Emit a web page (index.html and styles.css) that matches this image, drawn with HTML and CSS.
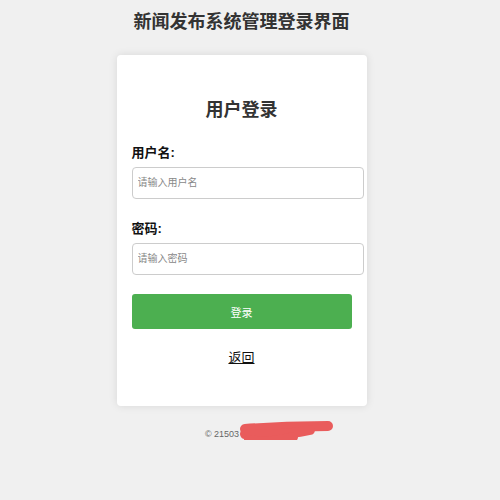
FILE: index.html
```html
<!DOCTYPE html>
<html lang="zh-CN">

<head>
    <meta charset="UTF-8">
    <meta name="viewport" content="width=device-width, initial-scale=1.0">
    <title>新闻发布系统管理登录界面</title>
    <link rel="stylesheet" href="styles.css">
</head>

<body>
    <h1 class="page-title">新闻发布系统管理登录界面</h1>

    <div class="login-box">
        <h2 class="login-title">用户登录</h2>
        <form class="login-form" onsubmit="return false;">
            <label class="form-label" for="username">用户名:</label>
            <input type="text" id="username" class="form-input" placeholder="请输入用户名">

            <label class="form-label" for="password">密码:</label>
            <input type="password" id="password" class="form-input" placeholder="请输入密码">

            <button type="submit" class="login-btn">登录</button>
        </form>
        <div class="back-link">
            <a href="#">返回</a>
        </div>
    </div>

    <footer class="footer">
        <span class="footer-line">© 21503
            <svg class="scribble" width="96" height="30" viewBox="0 0 96 30">
                <path d="M7,9 C35,7 65,6 90,6" />
                <path d="M7,14 C30,15 55,14 72,10" />
                <path d="M11,20 C25,23 40,21 55,17" />
            </svg>
        </span>
    </footer>
</body>

</html>
```

FILE: styles.css
```css
/* Basic reset */
* {
    margin: 0;
    padding: 0;
    box-sizing: content-box;
}

body {
    font-family: "Liberation Sans", Arial, "Noto Sans CJK SC", sans-serif;
    background: #f0f0f0;
    color: #333;
    padding-right: 17px;
}

.page-title {
    text-align: center;
    font-size: 18px;
    line-height: 26px;
    margin-top: 9px;
    color: #333;
}

/* Login card */
.login-box {
    width: 220px;
    padding: 15px;
    margin: 20px auto 0;
    background: #fff;
    border-radius: 4px;
    box-shadow: 0 0 8px rgba(0, 0, 0, 0.1);
}

.login-title {
    text-align: center;
    font-size: 18px;
    line-height: 24px;
    margin-top: 28px;
    color: #333;
}

.form-label {
    display: block;
    font-size: 13px;
    line-height: 18px;
    font-weight: bold;
    color: #111;
    margin-top: 22px;
}

.login-form .form-label + .form-input {
    margin-top: 5px;
}

.form-input {
    display: block;
    width: 100%;
    padding: 8px 5px;
    font-size: 10px;
    line-height: 14px;
    border: 1px solid #ccc;
    border-radius: 4px;
    font-family: inherit;
    color: #333;
}

.form-input::placeholder {
    color: #888;
}

.login-form .form-input + .form-label {
    margin-top: 21px;
}

.login-btn {
    display: block;
    width: 100%;
    height: 35px;
    margin-top: 19px;
    background: #4caf50;
    color: #fff;
    border: none;
    border-radius: 3px;
    font-size: 11px;
    font-family: inherit;
    cursor: pointer;
}

.back-link {
    text-align: center;
    margin-top: 20px;
    margin-bottom: 24px;
    font-size: 13px;
    line-height: 18px;
}

.back-link a {
    color: #111;
    text-decoration: underline;
}

/* Footer */
.footer {
    text-align: center;
    margin-top: 22px;
    font-size: 9px;
    line-height: 12px;
    color: #666;
}

.footer-line {
    position: relative;
    display: inline-block;
    padding-right: 39px;
}

.scribble {
    position: absolute;
    left: 33px;
    top: -8px;
}

.scribble path {
    fill: none;
    stroke: #e95c5c;
    stroke-width: 10;
    stroke-linecap: round;
}
```
